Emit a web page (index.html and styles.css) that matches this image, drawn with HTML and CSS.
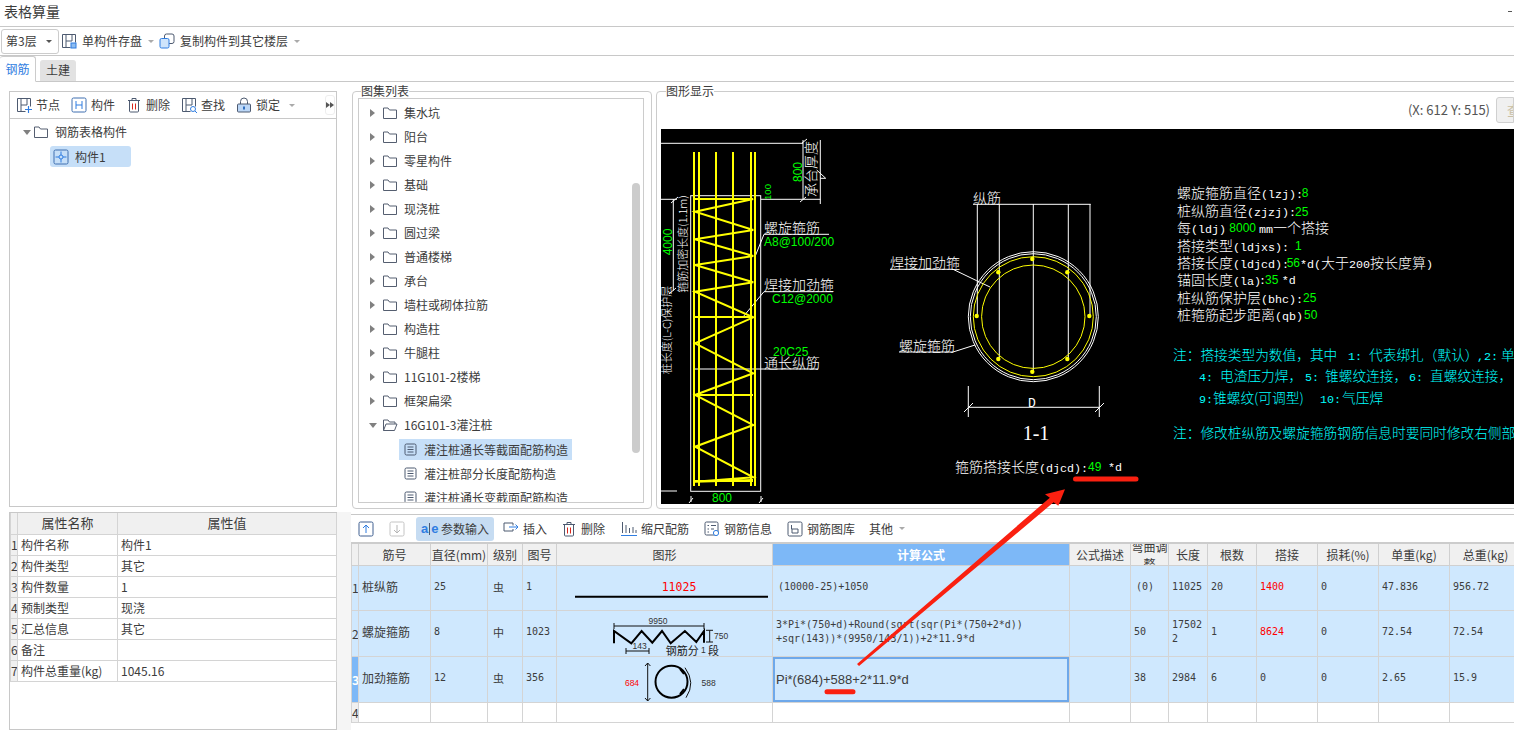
FILE: index.html
```html
<!DOCTYPE html>
<html lang="zh-CN">
<head>
<meta charset="utf-8">
<title>表格算量</title>
<link rel="stylesheet" href="styles.css">
</head>
<body>
<svg class="defs" width="0" height="0">
  <symbol id="i-frame" viewBox="0 0 16 16"><path d="M9.5 14.5h-8v-13h13v8M5 14.5V8h6V1.5M5 8V1.5" fill="none" stroke="#4d5a70"/></symbol>
  <symbol id="i-comp" viewBox="0 0 16 16"><rect x="1" y="1" width="14" height="14" rx="1.5" fill="none" stroke="#3f6fb0"/><path d="M5 4v8M11 4v8M5 8h6" fill="none" stroke="#2f7de1"/></symbol>
  <symbol id="i-trash" viewBox="0 0 16 16"><path d="M2 3.5h12M6 3.5v-2h4v2M3.5 3.5V14a1 1 0 0 0 1 1h7a1 1 0 0 0 1-1V3.5" fill="none" stroke="#4d5a70"/><path d="M6.5 6.5v6M9.5 6.5v6" stroke="#d9261c" fill="none"/></symbol>
  <symbol id="i-lock" viewBox="0 0 16 16"><path d="M4.5 7V4.5a3.5 3.5 0 0 1 7 0V7" fill="none" stroke="#4d5a70"/><rect x="1.5" y="7" width="13" height="8" rx="1" fill="#bcd7f7" stroke="#4d5a70"/><path d="M8 9.5v3" stroke="#2f6fc0" stroke-width="2"/></symbol>
  <symbol id="i-folder" viewBox="0 0 16 16"><path d="M1.5 13.5V3h4.5l1.5 2h7v8.5z" fill="none" stroke="#555e70" stroke-linejoin="round"/></symbol>
  <symbol id="i-open" viewBox="0 0 16 16"><path d="M1.5 13.5V3h4.5l1.5 2h5.5v2M1.5 13.5l2.5-6.5h11l-2.5 6.5z" fill="none" stroke="#555e70" stroke-linejoin="round"/></symbol>
  <symbol id="i-doc" viewBox="0 0 14 14"><rect x="1" y="1" width="11" height="11" rx="1.5" fill="none" stroke="#4d5a70"/><path d="M3.5 4h6M3.5 6.5h6M3.5 9h6" stroke="#4d5a70" fill="none"/></symbol>
  <symbol id="i-node" viewBox="0 0 16 16"><rect x="1" y="1" width="14" height="14" rx="1.5" fill="none" stroke="#3f6fb0"/><path d="M2.5 8H6M8 2.5V6M13.5 8H10M8 13.5V10" fill="none" stroke="#2f7de1"/><circle cx="8" cy="8" r="2" fill="none" stroke="#2f7de1"/></symbol>
  <symbol id="i-plus" viewBox="0 0 6 6"><path d="M3 0v6M0 3h6" stroke="#2f7de1" fill="none"/></symbol>
</svg>

<header class="titlebar"><span class="title">表格算量</span><span class="minimize"></span></header>

<div class="toolbar">
  <div class="combo"><span>第3层</span><span class="caret dark"></span></div>
  <svg class="ico ml2"><use href="#i-frame"/><rect x="10" y="10" width="5" height="5" fill="#8fbdf0" stroke="#2f7de1"/></svg>
  <span class="tool-t">单构件存盘</span><span class="caret sp9"></span>
  <svg class="ico ml5" viewBox="0 0 16 16"><rect x="5.5" y="1" width="9.5" height="9.5" rx="2" fill="#fff" stroke="#4d5a70"/><rect x="1" y="5.5" width="9" height="9.5" rx="1.5" fill="#cfe4fb" stroke="#2f7de1"/></svg>
  <span class="tool-t">复制构件到其它楼层</span><span class="caret sp9"></span>
</div>

<nav class="tabs">
  <span class="tab on">钢筋</span>
  <span class="tab">土建</span>
</nav>

<main class="main">
  <section class="left">
    <div class="treebox">
      <div class="treebar">
        <svg class="ico"><use href="#i-frame"/><use href="#i-plus" x="9" y="9" width="7" height="7"/></svg><span class="bt">节点</span>
        <svg class="ico"><use href="#i-comp"/></svg><span class="bt">构件</span>
        <svg class="ico"><use href="#i-trash"/></svg><span class="bt">删除</span>
        <svg class="ico"><use href="#i-frame"/><circle cx="12" cy="12" r="2.5" fill="none" stroke="#2f7de1"/><path d="M14 14l2 2" stroke="#2f7de1"/></svg><span class="bt">查找</span>
        <svg class="ico"><use href="#i-lock"/></svg><span class="bt">锁定</span>
        <span class="caret sp8"></span>
        <span class="more"><i class="mini"></i><i class="mini"></i></span>
      </div>
      <div class="tree-root"><span class="arrow down"></span><svg class="ico"><use href="#i-folder"/></svg><span class="rootname">钢筋表格构件</span></div>
      <div class="tree-node"><svg class="ico"><use href="#i-node"/></svg><span>构件1</span></div>
    </div>
    <div class="propsbox">
      <table class="props">
        <colgroup><col class="p0"><col class="p1"><col class="p2"></colgroup>
        <thead><tr><th></th><th>属性名称</th><th>属性值</th></tr></thead>
        <tbody>
          <tr><td class="rn">1</td><td>构件名称</td><td>构件1</td></tr>
          <tr><td class="rn">2</td><td>构件类型</td><td>其它</td></tr>
          <tr><td class="rn">3</td><td>构件数量</td><td>1</td></tr>
          <tr><td class="rn">4</td><td>预制类型</td><td>现浇</td></tr>
          <tr><td class="rn">5</td><td>汇总信息</td><td>其它</td></tr>
          <tr><td class="rn">6</td><td>备注</td><td></td></tr>
          <tr><td class="rn">7</td><td>构件总重量(kg)</td><td>1045.16</td></tr>
        </tbody>
      </table>
    </div>
  </section>

  <section class="right">
    <div class="toprow">
      <fieldset class="group listgroup">
        <legend>图集列表</legend>
        <div class="list">
          <div class="row"><span class="arrow"></span><svg class="ico"><use href="#i-folder"/></svg><span>集水坑</span></div>
          <div class="row"><span class="arrow"></span><svg class="ico"><use href="#i-folder"/></svg><span>阳台</span></div>
          <div class="row"><span class="arrow"></span><svg class="ico"><use href="#i-folder"/></svg><span>零星构件</span></div>
          <div class="row"><span class="arrow"></span><svg class="ico"><use href="#i-folder"/></svg><span>基础</span></div>
          <div class="row"><span class="arrow"></span><svg class="ico"><use href="#i-folder"/></svg><span>现浇桩</span></div>
          <div class="row"><span class="arrow"></span><svg class="ico"><use href="#i-folder"/></svg><span>圆过梁</span></div>
          <div class="row"><span class="arrow"></span><svg class="ico"><use href="#i-folder"/></svg><span>普通楼梯</span></div>
          <div class="row"><span class="arrow"></span><svg class="ico"><use href="#i-folder"/></svg><span>承台</span></div>
          <div class="row"><span class="arrow"></span><svg class="ico"><use href="#i-folder"/></svg><span>墙柱或砌体拉筋</span></div>
          <div class="row"><span class="arrow"></span><svg class="ico"><use href="#i-folder"/></svg><span>构造柱</span></div>
          <div class="row"><span class="arrow"></span><svg class="ico"><use href="#i-folder"/></svg><span>牛腿柱</span></div>
          <div class="row"><span class="arrow"></span><svg class="ico"><use href="#i-folder"/></svg><span>11G101-2楼梯</span></div>
          <div class="row"><span class="arrow"></span><svg class="ico"><use href="#i-folder"/></svg><span>框架扁梁</span></div>
          <div class="row"><span class="arrow down"></span><svg class="ico"><use href="#i-open"/></svg><span>16G101-3灌注桩</span></div>
          <div class="row child sel"><svg class="doc"><use href="#i-doc"/></svg><span>灌注桩通长等截面配筋构造</span></div>
          <div class="row child"><svg class="doc"><use href="#i-doc"/></svg><span>灌注桩部分长度配筋构造</span></div>
          <div class="row child"><svg class="doc"><use href="#i-doc"/></svg><span>灌注桩通长变截面配筋构造</span></div>
          <span class="thumb"></span>
        </div>
      </fieldset>

      <fieldset class="group drawgroup">
        <legend>图形显示</legend>
        <div class="coords"><span>(X: 612 Y: 515)</span><span class="viewbtn">查</span></div>
        <svg class="cad" width="853" height="375" viewBox="661 129 853 375">
          <g class="w1">
            <path d="M661 143.3H803M803 140V199M820.3 140V204M760.7 199.3H820.3M661 199.3H677M673.3 199V290.7M661 491H677"/>
            <path d="M816.7 170L825.7 178.3H820.3M802 143l5-4M800 202l6-5M669 294l7-6M671 203l7-6"/>
            <rect x="690.7" y="195.7" width="70" height="295.6"/>
            <path d="M764 234.3H829M755 256.7L764 234.3M764 291.7H833M743 317L764 291.7M695 369H818"/>
            <path d="M691 496v6M689 503l4-5M761 496v6M759 503l4-5"/>
            <path d="M973 204.3H1090.7M977.3 204V316M999.3 204V358M1033.3 204V372M1068.3 204V358M1090 204V316"/>
            <path d="M890 269.3H953L976.7 280.7L990 287M899 352H953L975 345"/>
            <path d="M968.3 386V417M1099.3 386V417M968.3 407.3H1099.3M964 412l9-9M1095 412l9-9"/>
            <circle cx="1033.3" cy="316.7" r="65"/>
            <circle cx="1033.3" cy="316.7" r="63"/>
          </g>
          <g class="y2">
            <path d="M694 152V486M699 152V486M716 152V486M733 152V486M751 152V486M755 152V486M695 199H753M695 317H753M695 395H753M695 481H753"/>
            <path d="M753.3 199L695 211.7L753.3 230L695 239.3L753.3 256L695 265L753.3 282.3L695 291.7L753.3 317.3L695 343.3L753.3 373.3L695 395L753.3 425L695 446.7L753.3 477.3L695 481.7L753 480"/>
          </g>
          <g class="y1">
            <circle cx="1033.3" cy="316.7" r="60"/>
            <circle cx="1033.3" cy="316.7" r="51.7"/>
          </g>
          <g class="dots">
            <circle cx="1032.3" cy="259" r="2.2"/><circle cx="998.3" cy="272.3" r="2.2"/><circle cx="1067.3" cy="272.3" r="2.2"/><circle cx="976.7" cy="316" r="2.2"/><circle cx="1089.3" cy="316" r="2.2"/><circle cx="998.3" cy="359" r="2.2"/><circle cx="1067.3" cy="359" r="2.2"/><circle cx="1032.3" cy="371.7" r="2.2"/>
          </g>

          <text class="t" transform="rotate(-90 812 169)" x="812" y="173" text-anchor="middle" font-size="12">承台厚度</text>
          <text class="t s11" transform="rotate(-90 683 244)" x="683" y="248" text-anchor="middle">箍筋加密长度(1.1m)</text>
          <text class="t s11" transform="rotate(-90 667 330)" x="667" y="334" text-anchor="middle">桩长度(L-C)保护层</text>
          <text class="g" transform="rotate(-90 668 242)" x="668" y="246" text-anchor="middle">4000</text>
          <text class="g" transform="rotate(-90 798 172)" x="798" y="176" text-anchor="middle">800</text>
          <text class="g s9" transform="rotate(-90 768 192)" x="768" y="195" text-anchor="middle">100</text>
          <text class="g" x="722" y="502" text-anchor="middle">800</text>

          <text class="t" x="764" y="233">螺旋箍筋</text>
          <text class="g" x="764" y="246">A8@100/200</text>
          <text class="t" x="764" y="290">焊接加劲箍</text>
          <text class="g" x="772" y="303">C12@2000</text>
          <text class="g" x="773" y="356">20C25</text>
          <text class="t" x="764" y="368">通长纵筋</text>

          <text class="t" x="973" y="203">纵筋</text>
          <text class="t" x="890" y="268">焊接加劲箍</text>
          <text class="t" x="899" y="351">螺旋箍筋</text>
          <text class="l big" x="1028" y="407">D</text>
          <text class="one" x="1036" y="440" text-anchor="middle">1-1</text>

          <text class="t" x="955" y="472">箍筋搭接长度<tspan class="l">(djcd):</tspan></text>
          <text class="g" x="1088" y="471">49</text>
          <text class="l" x="1108" y="471">*d</text>

          <text class="t" x="1177" y="198">螺旋箍筋直径<tspan class="l">(lzj):</tspan></text><text class="g" x="1301.7" y="197">8</text>
          <text class="t" x="1177" y="216">桩纵筋直径<tspan class="l">(zjzj):</tspan></text><text class="g" x="1295" y="216">25</text>
          <text class="t" x="1177" y="233">每<tspan class="l">(ldj)</tspan></text><text class="g" x="1229.3" y="232">8000</text><text class="t" x="1259" y="233"><tspan class="l">mm</tspan>一个搭接</text>
          <text class="t" x="1177" y="251">搭接类型<tspan class="l">(ldjxs):</tspan></text><text class="g" x="1295" y="250">1</text>
          <text class="t" x="1177" y="268">搭接长度<tspan class="l">(ldjcd):</tspan></text><text class="g" x="1286.7" y="267">56</text><text class="t" x="1300" y="268"><tspan class="l">*d(</tspan>大于<tspan class="l">200</tspan>按长度算<tspan class="l">)</tspan></text>
          <text class="t" x="1177" y="285">锚固长度<tspan class="l">(la)</tspan></text><text class="l" x="1259" y="284">:</text><text class="g" x="1265" y="284">35</text><text class="l" x="1281.7" y="284">*d</text>
          <text class="t" x="1177" y="303">桩纵筋保护层<tspan class="l">(bhc):</tspan></text><text class="g" x="1303" y="302">25</text>
          <text class="t" x="1177" y="320">桩箍筋起步距离<tspan class="l">(qb)</tspan></text><text class="g" x="1304" y="319">50</text>

          <text class="c" x="1173" y="360">注：搭接类型为数值，其中<tspan class="lc" x="1348">1:</tspan><tspan x="1369">代表绑扎（默认）</tspan><tspan class="lc" x="1477">,2:</tspan><tspan x="1501">单面焊</tspan></text>
          <text class="c" x="1199" y="381"><tspan class="lc">4:</tspan><tspan x="1220">电渣压力焊，</tspan><tspan class="lc" x="1305">5:</tspan><tspan x="1325">锥螺纹连接，</tspan><tspan class="lc" x="1409">6:</tspan><tspan x="1430">直螺纹连接，</tspan></text>
          <text class="c" x="1199" y="403"><tspan class="lc">9:</tspan><tspan x="1213">锥螺纹(可调型)</tspan><tspan class="lc" x="1320">10:</tspan><tspan x="1342">气压焊</tspan></text>
          <text class="c" x="1173" y="438">注：修改桩纵筋及螺旋箍筋钢筋信息时要同时修改右侧部分</text>
        </svg>
      </fieldset>
    </div>

    <div class="gridbar">
      <svg class="ico ml7" viewBox="0 0 16 16"><rect x="1" y="1" width="14" height="14" rx="1.5" fill="none" stroke="#3f5f90"/><path d="M8 12V4M5 7l3-3 3 3" fill="none" stroke="#2f7de1"/></svg>
      <svg class="ico ml15" viewBox="0 0 16 16"><rect x="1" y="1" width="14" height="14" rx="1.5" fill="none" stroke="#c4c4c4"/><path d="M8 4v8M5 9l3 3 3-3" fill="none" stroke="#b5b5b5"/></svg>
      <span class="active"><span class="ae">a<i></i>e</span>参数输入</span>
      <svg class="ico ml9" viewBox="0 0 16 16"><path d="M10 4.5V2H1v8h9V8" fill="none" stroke="#4d5a70"/><path d="M6 6h9M12.5 3.5L15 6l-2.5 2.5" fill="none" stroke="#2f7de1"/></svg><span class="gt">插入</span>
      <svg class="ico ml14"><use href="#i-trash"/></svg><span class="gt">删除</span>
      <svg class="ico ml16" viewBox="0 0 16 16"><path d="M1.5 1v11M5 4v8M8.5 7v5M12 6v6M15 9v3" fill="none" stroke="#4d5a70"/><path d="M0 14.5h16" stroke="#2f7de1" fill="none"/></svg><span class="gt">缩尺配筋</span>
      <svg class="ico ml15" viewBox="0 0 16 16"><rect x="1" y="1" width="13" height="13" rx="1.5" fill="none" stroke="#4d5a70"/><path d="M3.5 4.5h1.5M7 4.5h5M3.5 8h1.5M7 8h3M3.5 11h1.5" stroke="#4d5a70" fill="none"/><circle cx="12" cy="12" r="2.6" fill="#fff" stroke="#2f7de1"/></svg><span class="gt">钢筋信息</span>
      <svg class="ico ml15" viewBox="0 0 16 16"><rect x="1" y="1" width="14" height="14" rx="1.5" fill="none" stroke="#4d5a70"/><path d="M4.5 4v4h6.5v4H5V8" fill="none" stroke="#4d5a70"/></svg><span class="gt">钢筋图库</span>
      <span class="gt other">其他</span><span class="caret sp8"></span>
    </div>

    <div class="gridwrap">
      <table class="grid">
        <colgroup>
          <col class="c0"><col class="c1"><col class="c2"><col class="c3"><col class="c4"><col class="c5"><col class="c6"><col class="c7"><col class="c8"><col class="c9"><col class="c10"><col class="c11"><col class="c12"><col class="c13"><col class="c14">
        </colgroup>
        <thead>
          <tr>
            <th></th><th>筋号</th><th>直径(mm)</th><th>级别</th><th>图号</th><th>图形</th><th class="hot">计算公式</th><th>公式描述</th>
            <th><div class="clipcell">弯曲调整</div></th>
            <th>长度</th><th>根数</th><th>搭接</th><th>损耗(%)</th><th>单重(kg)</th><th>总重(kg)</th>
          </tr>
        </thead>
        <tbody>
          <tr class="r1 chosen">
            <td class="rn">1</td><td class="cn">桩纵筋</td><td>25</td><td class="sym">虫</td><td>1</td>
            <td class="shape"><svg class="sh" width="216" height="44" viewBox="557 565 216 44"><text class="redt" x="679" y="590" text-anchor="middle">11025</text><path d="M575 595.7H768" class="k2"/></svg></td>
            <td class="fm">(10000-25)+1050</td><td></td><td class="ctr">(0)</td><td>11025</td><td>20</td><td class="red">1400</td><td>0</td><td>47.836</td><td>956.72</td>
          </tr>
          <tr class="r2 chosen">
            <td class="rn">2</td><td class="cn">螺旋箍筋</td><td>8</td><td class="sym">中</td><td>1023</td>
            <td class="shape"><svg class="sh" width="216" height="45" viewBox="557 610 216 45">
              <path class="k1" d="M614 622V628M614 625H704M704 622V628M626 647V653M626 650H649M649 647V653M706 629.3H713M709.7 629.3V641M706 641H713"/>
              <path class="k2" d="M614 642.3V630L631.3 642.3L641.6 630L652.3 641.7L662 630L670.7 642.3L684.9 630L696.3 641L704 630V641.7"/>
              <text class="dim" x="658" y="623" text-anchor="middle">9950</text>
              <text class="dim" x="714" y="638">750</text>
              <text class="dim" x="639.7" y="648" text-anchor="middle">143</text>
              <text class="lab" x="665.7" y="654">钢筋分</text><text class="dim" x="701" y="652">1</text><text class="lab" x="708" y="654">段</text>
            </svg></td>
            <td class="fm two">3*Pi*(750+d)+Round(sqrt(sqr(Pi*(750+2*d))<br>+sqr(143))*(9950/143/1))+2*11.9*d</td><td></td><td>50</td><td class="brk">175022</td><td>1</td><td class="red">8624</td><td>0</td><td>72.54</td><td>72.54</td>
          </tr>
          <tr class="r3 chosen">
            <td class="rn cur">3</td><td class="cn">加劲箍筋</td><td>12</td><td class="sym">虫</td><td>356</td>
            <td class="shape"><svg class="sh" width="216" height="45" viewBox="557 656 216 45">
              <path class="k1" d="M647.7 662V700M645 665l2.7-3 2.7 3M645 697l2.7 3 2.7-3M685 666.7Q696 681.7 686 696.7"/>
              <circle class="k2" cx="671.5" cy="680.7" r="16"/>
              <path class="k2" d="M680 668l4 5M680 693l4-5"/>
              <text class="dimr" x="632" y="685" text-anchor="middle">684</text>
              <text class="dim" x="708.6" y="685" text-anchor="middle">588</text>
            </svg></td>
            <td class="edit">Pi*(684)+588+2*11.9*d</td><td></td><td>38</td><td>2984</td><td>6</td><td>0</td><td>0</td><td>2.65</td><td>15.9</td>
          </tr>
          <tr class="r4">
            <td class="rn">4</td><td></td><td></td><td></td><td></td><td></td><td></td><td></td><td></td><td></td><td></td><td></td><td></td><td></td><td></td>
          </tr>
        </tbody>
      </table>
    </div>
  </section>
</main>

<svg class="annot" width="1514" height="730" viewBox="0 0 1514 730">
  <polygon points="857,664 1049.8,497.7 1045,494.3 1065,489.3 1058.3,505.7 1053.6,502.3 859,666" fill="#fa2010"/>
  <path d="M1075.5 479H1136M827 691.7H853" stroke="#fa2010" stroke-width="5" stroke-linecap="round" fill="none"/>
</svg>
</body>
</html>
```

FILE: styles.css
```css
* { box-sizing: border-box; }
html, body { margin: 0; padding: 0; }
body {
  position: relative;
  width: 1514px;
  height: 730px;
  overflow: hidden;
  background: #fff;
  color: #3c3c3c;
  font: 12px/16px "Noto Sans CJK SC", "Noto Sans", sans-serif;
}
.defs { position: absolute; }

.titlebar { height: 27px; border-bottom: 1px solid #c8c8c8; display: flex; align-items: center; justify-content: space-between; padding: 0 2px 4px 4px; }
.title { font-size: 14px; }
.minimize { width: 4px; height: 1px; background: #555; }

.toolbar { height: 29px; border-bottom: 1px solid #c8c8c8; display: flex; align-items: center; padding-left: 1px; }
.combo { width: 58px; height: 25px; border: 1px solid #ccc; border-radius: 3px; display: flex; align-items: center; justify-content: space-between; padding: 0 6px 0 4px; }
.tool-t { margin-left: 5px; }
.ico { width: 16px; height: 16px; flex: none; }
.ml2 { margin-left: 2px; }
.ml5 { margin-left: 5px; }
.ml7 { margin-left: 7px; }
.ml9 { margin-left: 9px; }
.ml14 { margin-left: 14px; }
.ml15 { margin-left: 15px; }
.ml16 { margin-left: 16px; }
.caret { width: 0; height: 0; border: 3px solid transparent; border-top: 3px solid #aaa; border-bottom: 0; flex: none; }
.caret.dark { border-top-color: #555; }
.sp9 { margin-left: 6px; }
.sp8 { margin-left: 6px; }

.tabs { height: 26px; border-bottom: 1px solid #c8c8c8; display: flex; align-items: flex-end; gap: 4px; }
.tab { width: 36px; height: 21px; text-align: center; line-height: 20px; background: #e2e2e2; border-radius: 3px 3px 0 0; }
.tab.on { height: 26px; line-height: 24px; background: #fff; color: #2f7de1; border: 1px solid #ccc; border-bottom: 1px solid #fff; margin-bottom: -1px; padding-bottom: 1px; border-left: 0; }

.main { display: flex; height: 648px; }
.left { width: 351px; flex: none; padding: 9px 0 0 9px; }
.treebox { width: 328px; height: 416px; border: 1px solid #c8c8c8; }
.treebar { height: 27px; border-bottom: 1px solid #c8c8c8; display: flex; align-items: center; padding-left: 6px; position: relative; }
.bt { margin: 0 11px 0 4px; }
.bt + .caret { margin-left: -2px; }
.more { position: absolute; left: 315px; top: 3px; width: 10px; height: 20px; border: 1px solid #eee; border-radius: 3px; display: flex; align-items: center; justify-content: center; }
.mini { width: 0; height: 0; flex: none; border-style: solid; border-width: 3px 0 3px 4px; border-color: transparent transparent transparent #555; }
.tree-root { display: flex; align-items: center; height: 24px; margin-top: 1px; padding-left: 13px; }
.tree-root .ico { margin-left: 2px; }
.rootname { margin-left: 6px; }
.arrow { width: 0; height: 0; flex: none; border-style: solid; border-width: 4px 0 4px 5px; border-color: transparent transparent transparent #808080; }
.arrow.down { border-width: 5px 4px 0 4px; border-color: #808080 transparent transparent transparent; }
.tree-node { display: flex; align-items: center; gap: 6px; width: 81px; height: 21px; margin: 2px 0 0 40px; padding-left: 3px; background: #c6dff8; border-radius: 3px; }

.propsbox { width: 328px; height: 218px; margin-top: 5px; border: 1px solid #c8c8c8; box-shadow: 14px 0 0 #f5f5f5; }
table { border-collapse: collapse; table-layout: fixed; }
.props { width: 326px; }
.p0 { width: 7px; }
.p1 { width: 100px; }
.p2 { width: 219px; }
.props th { height: 21px; padding: 0; background: #f0f0f0; border: 1px solid #d4d4d4; border-top: 0; font-size: 13px; font-weight: 400; }
.props td { height: 21px; padding: 0 0 0 3px; border: 1px solid #d4d4d4; }
td.rn { padding: 0; background: #f0f0f0; text-align: center; overflow: hidden; }

.right { flex: 1; min-width: 0; }
.toprow { display: flex; height: 433px; gap: 4px; padding-left: 1px; }
.group { margin: 2px 0 0; padding: 0; border: 1px solid #ccc; border-radius: 4px; min-width: 0; }
.group legend { padding: 0; line-height: 14px; color: #3c3c3c; }
.listgroup legend { margin-left: 3px; }
.drawgroup legend { margin-left: 5px; }
.listgroup { width: 300px; height: 425px; flex: none; padding: 0 7px 0 5px; }
.list { position: relative; width: 286px; height: 405px; border: 1px solid #ccc; overflow: hidden; padding: 2px 0 0 11px; }
.row { display: flex; align-items: center; height: 24px; }
.row .ico { margin-left: 7px; }
.row .arrow.down { margin: 0 -2px 0 -1px; }
.row > span:last-child { margin-left: 6px; }
.row.child { margin-left: 29px; width: 173px; padding-left: 5px; height: 21px; margin-top: 3px; }
.row.child.sel { margin-top: 2px; }
.sel { background: #c6dff8; }
.doc { width: 14px; height: 14px; flex: none; }
.thumb { position: absolute; left: 273px; top: 84px; width: 8px; height: 270px; background: #ccc; border-radius: 4px; }

.drawgroup { width: 900px; flex: none; height: 425px; padding: 0 0 0 4px; }
.coords { width: 853px; height: 26px; margin: -1px 0 6px; display: flex; justify-content: flex-end; align-items: center; gap: 6px; color: #555; overflow: hidden; font-size: 13px; }
.viewbtn { width: 18px; height: 26px; flex: none; background: #f0f0f0; border: 1px solid #d0d0d0; border-radius: 3px 0 0 3px; color: #c9bfa5; padding-left: 10px; line-height: 24px; overflow: hidden; white-space: nowrap; }
.cad { display: block; background: #000; }
.w1 { fill: none; stroke: #fff; stroke-width: 1; }
.y2 { fill: none; stroke: #ff0; stroke-width: 2; }
.y1 { fill: none; stroke: #ff0; stroke-width: 1; }
.dots { fill: #ff0; }
.t { fill: #fff; font: 300 14px "Noto Sans CJK SC", sans-serif; white-space: pre; }
.s11 { font-size: 11px; }
.g { fill: #0f0; font: 12px "Liberation Sans", sans-serif; }
.s9 { font-size: 9.5px; }
.l { fill: #fff; font: 11.7px "Liberation Mono", monospace; }
.big { font-size: 13px; }
.c { fill: #0ff; font: 300 13.7px "Noto Sans CJK SC", sans-serif; white-space: pre; }
.lc { font: 11.7px "Liberation Mono", monospace; }
.one { fill: #fff; font: 20px "Liberation Serif", serif; }

.gridbar { height: 28px; margin-top: -1px; border-top: 1px solid #c8c8c8; display: flex; align-items: center; }
.active { display: flex; align-items: center; width: 78px; height: 24px; margin-left: 11px; padding-left: 5px; background: #c6dcf2; border-radius: 3px; }
.ae { color: #2f7de1; font: 700 13px "Liberation Sans", sans-serif; width: 20px; }
.ae i { display: inline-block; width: 1px; height: 12px; margin: 0 1px; background: #4d5a70; vertical-align: -2px; }
.gt { margin-left: 4px; }
.gt.other { margin-left: 14px; }

.gridwrap { overflow: hidden; }
.grid { width: 1170px; font: 10px/14px "DejaVu Sans Mono", monospace; }
.c0 { width: 7px; }
.c1 { width: 72px; }
.c2 { width: 57px; }
.c3 { width: 35px; }
.c4 { width: 34px; }
.c5 { width: 216px; }
.c6 { width: 297px; }
.c7 { width: 61px; }
.c8 { width: 38px; }
.c9 { width: 39px; }
.c10 { width: 49px; }
.c11 { width: 61px; }
.c12 { width: 61px; }
.c13 { width: 71px; }
.c14 { width: 72px; }
.grid th { height: 22px; padding: 0; background: #f0f0f0; border: 1px solid #d0d0d0; border-top: 2px solid #ccc; font: 400 12px/16px "Noto Sans CJK SC", sans-serif; overflow: hidden; }
.grid th.hot { background: #7db8f7; color: #fff; font-weight: 700; }
.grid td { padding: 0 0 3px 3px; border: 1px solid #d4d4d4; overflow: hidden; }
.clipcell { height: 21px; overflow: hidden; display: flex; align-items: center; text-align: center; line-height: 17px; }
.r1 td { height: 44px; }
.r2 td, .r3 td { height: 45px; }
.r4 td { height: 20px; }
.chosen td { background: #cfe8fe; }
.grid td.rn { padding: 0; font: 12px/16px "Noto Sans CJK SC", sans-serif; background: #f0f0f0; }
.chosen td.rn { background: #cfe8fe; }
.chosen td.rn.cur { background: #7db8f7; color: #fff; font-weight: 700; }
.grid td.cn { font: 12px/16px "Noto Sans CJK SC", sans-serif; padding-bottom: 3px; }
.grid td.sym { padding-left: 5px; font: 11px "Noto Sans CJK SC", sans-serif; }
.grid td.shape { padding: 0; }
.sh { display: block; }
.redt { fill: #f00; font: 11.5px "DejaVu Sans Mono", monospace; }
.k1 { fill: none; stroke: #111; stroke-width: 1; }
.k2 { fill: none; stroke: #000; stroke-width: 2; }
.dim { fill: #333; font: 8.5px "Liberation Sans", sans-serif; }
.dimr { fill: #f00; font: 8.5px "Liberation Sans", sans-serif; }
.lab { fill: #222; font: 11px "Noto Sans CJK SC", sans-serif; }
.grid td.fm { padding-left: 5px; white-space: nowrap; }
.grid td.two { padding-left: 3px; }
.grid td.ctr { padding-left: 5px; }
.grid td.red { color: #f00; }
.grid td.brk { word-break: break-all; }
.grid td.edit { padding: 0 0 0 3px; font: 13px "Liberation Sans", sans-serif; box-shadow: inset 0 0 0 2px #6ea8ea; }

.annot { position: absolute; left: 0; top: 0; pointer-events: none; }
```
